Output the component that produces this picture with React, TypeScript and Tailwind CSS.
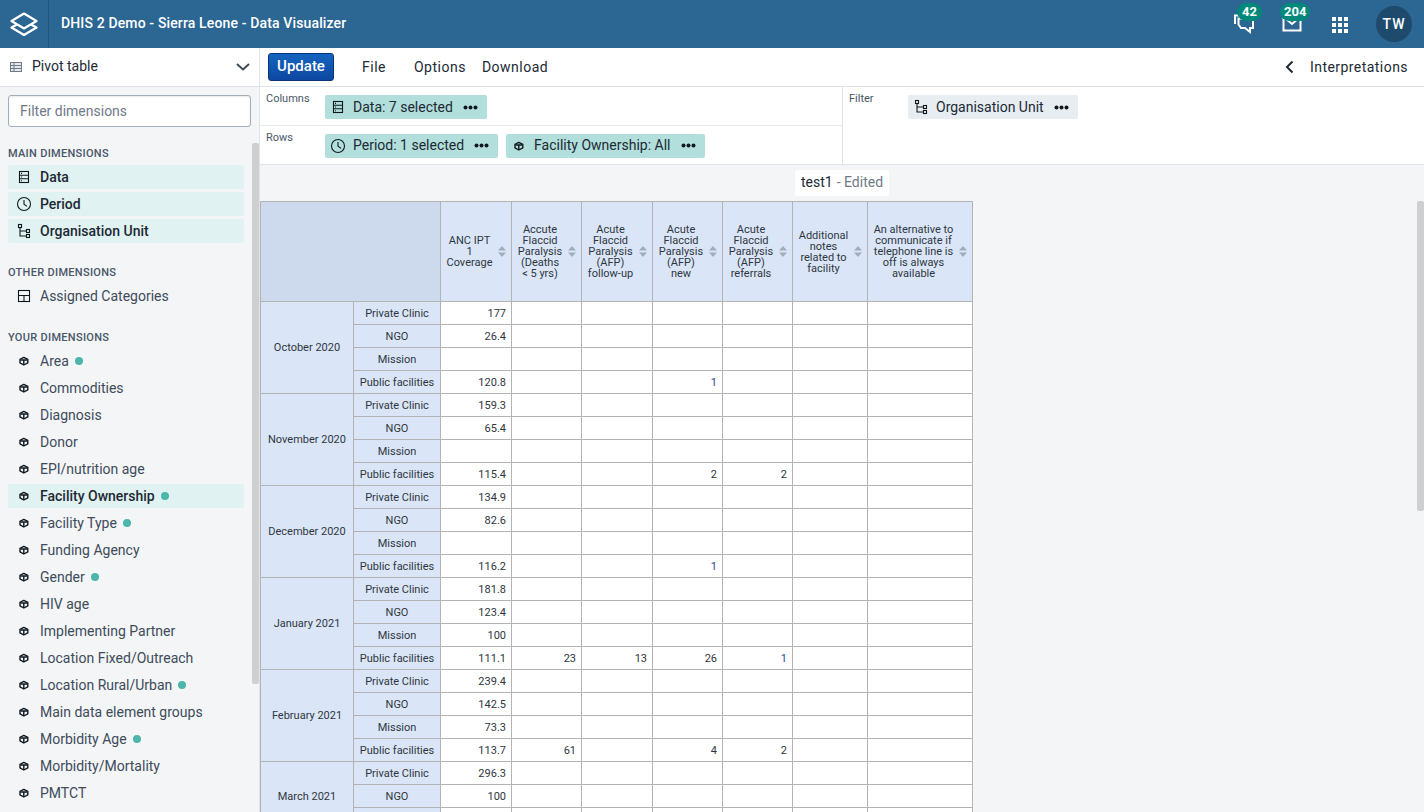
import React from "react";

const Dots = () => (
  <svg width="15" height="5" viewBox="0 0 15 5" className="shrink-0">
    <circle cx="2.5" cy="2.5" r="2" fill="#10181f" />
    <circle cx="7.5" cy="2.5" r="2" fill="#10181f" />
    <circle cx="12.5" cy="2.5" r="2" fill="#10181f" />
  </svg>
);

const DataIcon = () => (
  <svg width="16" height="16" viewBox="0 0 16 16" fill="none" stroke="#10181f" strokeWidth="1.1" className="shrink-0">
    <rect x="3.5" y="2.5" width="9" height="11" />
    <path d="M3.5 6.2h9M3.5 9.8h9" />
    <path d="M5 4.4h1M5 8h1M5 11.7h1" />
  </svg>
);
const ClockIcon = () => (
  <svg width="16" height="16" viewBox="0 0 16 16" fill="none" stroke="#10181f" strokeWidth="1.1" className="shrink-0">
    <circle cx="8" cy="8" r="6.5" />
    <path d="M8 4v4.2l3 2.2" />
  </svg>
);
const OrgIcon = () => (
  <svg width="16" height="16" viewBox="0 0 16 16" fill="none" stroke="#10181f" strokeWidth="1.1" className="shrink-0">
    <rect x="2.5" y="1.5" width="3" height="3" />
    <rect x="10.5" y="6.5" width="3" height="3" />
    <rect x="10.5" y="11.5" width="3" height="3" />
    <path d="M4 4.5V13h6.5M4 8h6.5" />
  </svg>
);
const CatIcon = () => (
  <svg width="16" height="16" viewBox="0 0 16 16" fill="none" stroke="#10181f" strokeWidth="1.1" className="shrink-0">
    <rect x="2.5" y="2.5" width="11" height="11" />
    <path d="M2.5 7.5h11M8 7.5v6" />
  </svg>
);
const DimIcon = () => (
  <svg width="16" height="16" viewBox="0 0 16 16" fill="none" stroke="#10181f" strokeWidth="1.4" strokeLinejoin="round" className="shrink-0">
    <path d="M4 6.3 7.8 4.4l4 1.9v3.6L7.8 12 4 9.9z" />
    <path d="M4.5 7h6.8M7.8 7v5" />
  </svg>
);

const Chip = ({ icon, label, bg = "bg-[#b2dfdb]" }: any) => (
  <div className={`h-6 flex items-center rounded-[2px] pl-[5px] pr-[9px] ${bg}`}>
    <div className="flex items-center gap-[7px]">
      {icon}
      <span className="text-[14px] text-[#212934]">{label}</span>
    </div>
    <span className="ml-[10px] flex">
      <Dots />
    </span>
  </div>
);

const SideItem = ({ icon, label, active, dot, sel }: any) => (
  <div className={`h-6 flex items-center pl-[8px] gap-[8px] rounded-[2px] ${active ? "bg-[#e0f2f1]" : ""}`}>
    {icon}
    <span className={`text-[14px] leading-none ${sel ? "font-medium text-[#212934]" : "text-[#404b5a]"}`}>{label}</span>
    {dot && <span className="w-2 h-2 rounded-full bg-[#4db6ac] -ml-[2px]" />}
  </div>
);

const dims: [string, boolean, boolean][] = [
  ["Area", true, false],
  ["Commodities", false, false],
  ["Diagnosis", false, false],
  ["Donor", false, false],
  ["EPI/nutrition age", false, false],
  ["Facility Ownership", true, true],
  ["Facility Type", true, false],
  ["Funding Agency", false, false],
  ["Gender", true, false],
  ["HIV age", false, false],
  ["Implementing Partner", false, false],
  ["Location Fixed/Outreach", false, false],
  ["Location Rural/Urban", true, false],
  ["Main data element groups", false, false],
  ["Morbidity Age", true, false],
  ["Morbidity/Mortality", false, false],
  ["PMTCT", false, false],
];

const Sort = () => (
  <svg width="8" height="11" viewBox="0 0 8 11" className="shrink-0">
    <path d="M4 0 8 4.5H0z" fill="#a0adba" />
    <path d="M4 11 8 6.5H0z" fill="#a0adba" />
  </svg>
);

const headers: { w: string; lines: string[] }[] = [
  { w: "w-[71px]", lines: ["ANC IPT", "1", "Coverage"] },
  { w: "w-[70px]", lines: ["Accute", "Flaccid", "Paralysis", "(Deaths", "< 5 yrs)"] },
  { w: "w-[71px]", lines: ["Acute", "Flaccid", "Paralysis", "(AFP)", "follow-up"] },
  { w: "w-[70px]", lines: ["Acute", "Flaccid", "Paralysis", "(AFP)", "new"] },
  { w: "w-[70px]", lines: ["Acute", "Flaccid", "Paralysis", "(AFP)", "referrals"] },
  { w: "w-[75px]", lines: ["Additional", "notes", "related to", "facility"] },
  { w: "w-[105px]", lines: ["An alternative to", "communicate if", "telephone line is", "off is always", "available"] },
];

const ownership = ["Private Clinic", "NGO", "Mission", "Public facilities"];

const periods: { name: string; labels: string[]; rows: string[][] }[] = [
  { name: "October 2020", labels: ownership, rows: [["177"], ["26.4"], [""], ["120.8", "", "", "1"]] },
  { name: "November 2020", labels: ownership, rows: [["159.3"], ["65.4"], [""], ["115.4", "", "", "2", "2"]] },
  { name: "December 2020", labels: ownership, rows: [["134.9"], ["82.6"], [""], ["116.2", "", "", "1"]] },
  { name: "January 2021", labels: ownership, rows: [["181.8"], ["123.4"], ["100"], ["111.1", "23", "13", "26", "1"]] },
  { name: "February 2021", labels: ownership, rows: [["239.4"], ["142.5"], ["73.3"], ["113.7", "61", "", "4", "2"]] },
  { name: "March 2021", labels: ["Private Clinic", "NGO", ""], rows: [["296.3"], ["100"], [""]] },
];

export default function App() {
  return (
    <div className="h-screen w-full overflow-hidden flex flex-col bg-white font-['Roboto',sans-serif]">
      {/* Header */}
      <header className="h-12 shrink-0 bg-[#2c6693] flex items-center text-white">
        <div className="w-[49px] h-12 flex items-center justify-center border-r border-[#22567f]">
          <svg width="28" height="24" viewBox="0 0 28 24" fill="none" stroke="#fff" strokeWidth="2.2" strokeLinejoin="round">
            <path d="M14 1.5 26.5 9 14 16.5 1.5 9z" />
            <path d="M7 12.5 1.5 15.5 14 23 26.5 15.5 21 12.5" />
          </svg>
        </div>
        <div className="ml-3 mb-[2px] text-[14px] font-medium tracking-[0.14px]">DHIS 2 Demo - Sierra Leone - Data Visualizer</div>
        <div className="ml-auto flex items-center">
          <div className="relative w-6 h-6 mr-[26px]">
            <svg width="24" height="24" viewBox="0 0 24 24" fill="none" stroke="#fff" strokeWidth="2">
              <path d="M3 12V3.5h5" />
              <path d="M6.5 6.5H21V16h-3v4l-5-4H9l-2.5-3.5z" />
            </svg>
            <span className="absolute -top-[9px] left-[5px] h-[18px] px-[5px] rounded-full bg-[#00897b] text-[13px] font-bold leading-[18px]">42</span>
          </div>
          <div className="relative w-6 h-6 mr-[26px]">
            <svg width="24" height="24" viewBox="0 0 24 24" fill="none" stroke="#fff" strokeWidth="2">
              <path d="M1.5 6.5h17v12h-17z" />
              <path d="M3 6l7 6 7-6" />
            </svg>
            <span className="absolute -top-[9px] -left-[2px] h-[18px] px-[4px] rounded-full bg-[#00897b] text-[13px] font-bold leading-[18px]">204</span>
          </div>
          <div className="grid grid-cols-3 gap-[2px] w-[16px] mt-[2px] mr-[28px]">
            {Array.from({ length: 9 }).map((_, i) => (
              <span key={i} className="w-[4px] h-[4px] bg-white" />
            ))}
          </div>
          <div className="w-9 h-9 mr-[12px] rounded-full bg-[#1d4a6d] flex items-center justify-center text-[14px] font-medium tracking-[1px]">TW</div>
        </div>
      </header>

      <div className="flex-1 flex min-h-0">
        {/* Sidebar */}
        <aside className="w-[260px] shrink-0 flex flex-col border-r border-[#e0e4e8] bg-[#f3f5f7]">
          <div className="h-[39px] shrink-0 bg-white border-b border-[#e0e4e8] flex items-center pl-[10px] pr-[9px]">
            <svg width="12" height="10" viewBox="0 0 12 10" fill="none" stroke="#6e7a8a" strokeWidth="1">
              <rect x=".5" y=".5" width="11" height="9" fill="#e5e8eb" />
              <path d="M.5 3.5h11M.5 6.5h11M4 .5v9" />
            </svg>
            <span className="ml-[10px] mb-[2px] text-[14px] text-[#212934]">Pivot table</span>
            <svg className="ml-auto" width="14" height="8" viewBox="0 0 14 8" fill="none" stroke="#404b5a" strokeWidth="2">
              <path d="M1 1l6 5.5L13 1" />
            </svg>
          </div>
          <div className="flex-1 relative overflow-hidden pl-2 pr-[15px]">
            <div className="mt-2 w-[243px] h-8 bg-white border border-[#a0adba] rounded-[3px] shadow-[inset_0_1px_2px_rgba(33,41,52,0.1)] flex items-center pl-[11px] text-[14px] text-[#6e7a8a]">
              Filter dimensions
            </div>
            <div className="mt-[20px] text-[11px] font-medium tracking-[0.3px] leading-[13px] text-[#4a5768]">MAIN DIMENSIONS</div>
            <div className="mt-[5px] flex flex-col gap-[3px]">
              <SideItem icon={<DataIcon />} label="Data" active sel />
              <SideItem icon={<ClockIcon />} label="Period" active sel />
              <SideItem icon={<OrgIcon />} label="Organisation Unit" active sel />
            </div>
            <div className="mt-[23px] text-[11px] font-medium tracking-[0.3px] leading-[13px] text-[#4a5768]">OTHER DIMENSIONS</div>
            <div className="mt-[5px]">
              <SideItem icon={<CatIcon />} label="Assigned Categories" />
            </div>
            <div className="mt-[23px] text-[11px] font-medium tracking-[0.3px] leading-[13px] text-[#4a5768]">YOUR DIMENSIONS</div>
            <div className="mt-[5px] flex flex-col gap-[3px]">
              {dims.map(([n, dot, sel]) => (
                <SideItem key={n} icon={<DimIcon />} label={n} dot={dot} active={sel} sel={sel} />
              ))}
            </div>
            <div className="absolute right-0 top-[56px] w-[7px] h-[541px] bg-[#cfcfcf] rounded-[2px]" />
          </div>
        </aside>

        {/* Main */}
        <main className="flex-1 min-w-0 flex flex-col">
          <div className="h-[39px] shrink-0 border-b border-[#e0e4e8] flex items-center pl-2 pb-[1px]">
            <button className="w-[66px] h-7 rounded-[3px] bg-gradient-to-b from-[#1565c0] to-[#0d47a1] border border-[#093371] text-white text-[15px] font-medium">Update</button>
            <span className="ml-[28px] mt-[2px] text-[14px] tracking-[0.5px] text-[#212934]">File</span>
            <span className="ml-[28px] mt-[2px] text-[14px] tracking-[0.5px] text-[#212934]">Options</span>
            <span className="ml-[16px] mt-[2px] text-[14px] tracking-[0.5px] text-[#212934]">Download</span>
            <div className="ml-auto flex items-center mr-[16px]">
              <svg width="9" height="14" viewBox="0 0 9 14" fill="none" stroke="#212934" strokeWidth="2">
                <path d="M7.5 1.5 2 7l5.5 5.5" />
              </svg>
              <span className="ml-[16px] mt-[2px] text-[14px] tracking-[0.45px] text-[#212934]">Interpretations</span>
            </div>
          </div>

          <div className="h-[78px] shrink-0 flex border-b border-[#e0e4e8]">
            <div className="w-[583px] border-r border-[#e0e4e8] flex flex-col">
              <div className="h-[39px] border-b border-[#e8ecef] flex pl-[6px] pt-[8px]">
                <span className="w-[59px] -mt-[3px] text-[11px] leading-[13px] text-[#4a5768]">Columns</span>
                <Chip icon={<DataIcon />} label="Data: 7 selected" />
              </div>
              <div className="h-[39px] flex pl-[6px] pt-[8px]">
                <span className="w-[59px] -mt-[3px] text-[11px] leading-[13px] text-[#4a5768]">Rows</span>
                <Chip icon={<ClockIcon />} label="Period: 1 selected" />
                <div className="ml-2">
                  <Chip icon={<DimIcon />} label="Facility Ownership: All" />
                </div>
              </div>
            </div>
            <div className="flex-1 flex pl-[6px] pt-[8px]">
              <span className="w-[59px] -mt-[3px] text-[11px] leading-[13px] text-[#4a5768]">Filter</span>
              <Chip icon={<OrgIcon />} label="Organisation Unit" bg="bg-[#e8edf2]" />
            </div>
          </div>

          <div className="flex-1 min-h-0 relative overflow-hidden bg-[#f3f5f7]">
            <div className="absolute right-0 top-[36px] w-[7px] h-[310px] bg-[#cfcfcf] rounded-[2px]" />
            <div className="flex justify-center pt-[5px] w-[1164px] h-[36px]">
              <div className="h-[26px] w-[94px] pb-[2px] bg-white rounded-[3px] flex items-center justify-center text-[14px] text-[#212934]">
                test1<span className="text-[#6e7a8a] ml-1">- Edited</span>
              </div>
            </div>
            <table className="table-fixed border-collapse w-[713px] text-[11px] leading-[11px] text-[#2f3640]">
              <colgroup>
                <col className="w-[93px]" />
                <col className="w-[87px]" />
                {headers.map((h, i) => (
                  <col key={i} className={h.w} />
                ))}
              </colgroup>
              <thead>
                <tr className="h-[100px]">
                  <th colSpan={2} className="border border-[#b3b3b3] bg-[#cddaed]" />
                  {headers.map((h, i) => (
                    <th key={i} className="border border-[#b3b3b3] bg-[#dae6f8] font-normal pl-[5px] pr-[5px]">
                      <div className="flex items-center gap-[5px]">
                        <div className="flex-1 text-center whitespace-nowrap">
                          {h.lines.map((l) => (
                            <div key={l}>{l}</div>
                          ))}
                        </div>
                        <Sort />
                      </div>
                    </th>
                  ))}
                </tr>
              </thead>
              <tbody>
                {periods.flatMap((p) =>
                  p.labels.map((o, ri) => (
                    <tr key={p.name + ri} className="h-[23px]">
                      {ri === 0 && (
                        <td rowSpan={p.labels.length} className="border border-[#b3b3b3] bg-[#dae6f8] text-center">
                          {p.name}
                        </td>
                      )}
                      <td className="border border-[#b3b3b3] bg-[#dae6f8] text-center">{o}</td>
                      {headers.map((_, ci) => {
                        const v = p.rows[ri][ci] ?? "";
                        return (
                          <td key={ci} className={`border border-[#b3b3b3] bg-white text-right px-[5px] ${v === "1" ? "text-[#34468f]" : ""}`}>
                            {v}
                          </td>
                        );
                      })}
                    </tr>
                  ))
                )}
              </tbody>
            </table>
          </div>
        </main>
      </div>
    </div>
  );
}
